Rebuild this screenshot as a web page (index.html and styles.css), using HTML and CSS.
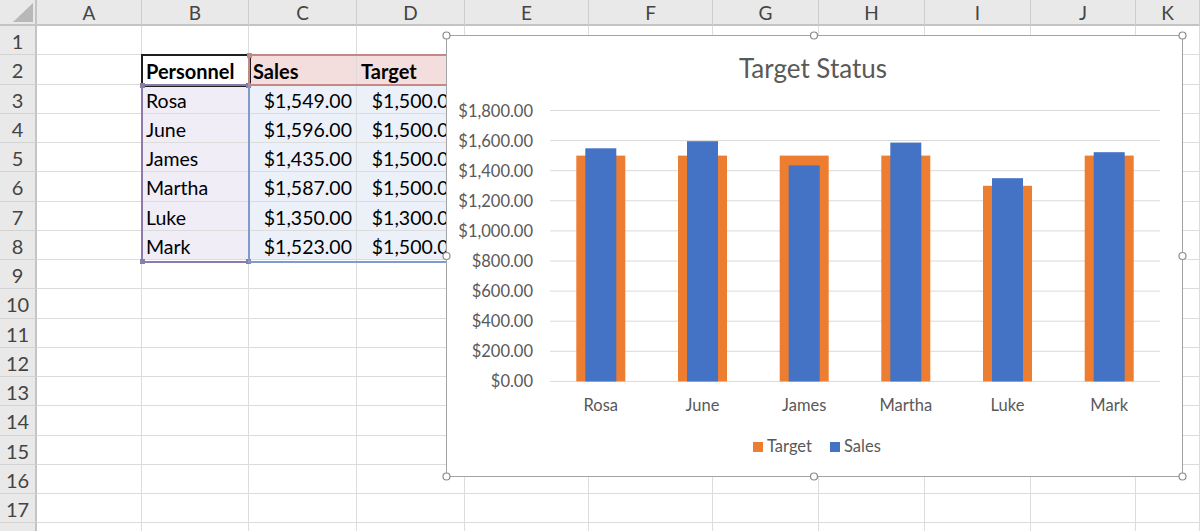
FILE: index.html
```html
<!DOCTYPE html>
<html>
<head>
<meta charset="utf-8">
<link rel="stylesheet" href="styles.css">
</head>
<body>
<div class="sheet">
  <div class="ch corner"><span class="tri"></span></div>
  <div class="ch">A</div><div class="ch">B</div><div class="ch">C</div><div class="ch">D</div><div class="ch">E</div><div class="ch">F</div><div class="ch">G</div><div class="ch">H</div><div class="ch">I</div><div class="ch">J</div><div class="ch">K</div>

  <div class="rn">1</div><div class="c"></div><div class="c"></div><div class="c"></div><div class="c"></div><div class="c"></div><div class="c"></div><div class="c"></div><div class="c"></div><div class="c"></div><div class="c"></div><div class="c"></div>

  <div class="rn">2</div><div class="c"></div><div class="c b">Personnel</div><div class="c b ser">Sales</div><div class="c b ser">Target</div><div class="c"></div><div class="c"></div><div class="c"></div><div class="c"></div><div class="c"></div><div class="c"></div><div class="c"></div>

  <div class="rn">3</div><div class="c"></div><div class="c cat">Rosa</div><div class="c num val">$1,549.00</div><div class="c num val">$1,500.00</div><div class="c"></div><div class="c"></div><div class="c"></div><div class="c"></div><div class="c"></div><div class="c"></div><div class="c"></div>

  <div class="rn">4</div><div class="c"></div><div class="c cat">June</div><div class="c num val">$1,596.00</div><div class="c num val">$1,500.00</div><div class="c"></div><div class="c"></div><div class="c"></div><div class="c"></div><div class="c"></div><div class="c"></div><div class="c"></div>

  <div class="rn">5</div><div class="c"></div><div class="c cat">James</div><div class="c num val">$1,435.00</div><div class="c num val">$1,500.00</div><div class="c"></div><div class="c"></div><div class="c"></div><div class="c"></div><div class="c"></div><div class="c"></div><div class="c"></div>

  <div class="rn">6</div><div class="c"></div><div class="c cat">Martha</div><div class="c num val">$1,587.00</div><div class="c num val">$1,500.00</div><div class="c"></div><div class="c"></div><div class="c"></div><div class="c"></div><div class="c"></div><div class="c"></div><div class="c"></div>

  <div class="rn">7</div><div class="c"></div><div class="c cat">Luke</div><div class="c num val">$1,350.00</div><div class="c num val">$1,300.00</div><div class="c"></div><div class="c"></div><div class="c"></div><div class="c"></div><div class="c"></div><div class="c"></div><div class="c"></div>

  <div class="rn">8</div><div class="c"></div><div class="c cat">Mark</div><div class="c num val">$1,523.00</div><div class="c num val">$1,500.00</div><div class="c"></div><div class="c"></div><div class="c"></div><div class="c"></div><div class="c"></div><div class="c"></div><div class="c"></div>

  <div class="rn">9</div><div class="c"></div><div class="c"></div><div class="c"></div><div class="c"></div><div class="c"></div><div class="c"></div><div class="c"></div><div class="c"></div><div class="c"></div><div class="c"></div><div class="c"></div>
  <div class="rn">10</div><div class="c"></div><div class="c"></div><div class="c"></div><div class="c"></div><div class="c"></div><div class="c"></div><div class="c"></div><div class="c"></div><div class="c"></div><div class="c"></div><div class="c"></div>
  <div class="rn">11</div><div class="c"></div><div class="c"></div><div class="c"></div><div class="c"></div><div class="c"></div><div class="c"></div><div class="c"></div><div class="c"></div><div class="c"></div><div class="c"></div><div class="c"></div>
  <div class="rn">12</div><div class="c"></div><div class="c"></div><div class="c"></div><div class="c"></div><div class="c"></div><div class="c"></div><div class="c"></div><div class="c"></div><div class="c"></div><div class="c"></div><div class="c"></div>
  <div class="rn">13</div><div class="c"></div><div class="c"></div><div class="c"></div><div class="c"></div><div class="c"></div><div class="c"></div><div class="c"></div><div class="c"></div><div class="c"></div><div class="c"></div><div class="c"></div>
  <div class="rn">14</div><div class="c"></div><div class="c"></div><div class="c"></div><div class="c"></div><div class="c"></div><div class="c"></div><div class="c"></div><div class="c"></div><div class="c"></div><div class="c"></div><div class="c"></div>
  <div class="rn">15</div><div class="c"></div><div class="c"></div><div class="c"></div><div class="c"></div><div class="c"></div><div class="c"></div><div class="c"></div><div class="c"></div><div class="c"></div><div class="c"></div><div class="c"></div>
  <div class="rn">16</div><div class="c"></div><div class="c"></div><div class="c"></div><div class="c"></div><div class="c"></div><div class="c"></div><div class="c"></div><div class="c"></div><div class="c"></div><div class="c"></div><div class="c"></div>
  <div class="rn">17</div><div class="c"></div><div class="c"></div><div class="c"></div><div class="c"></div><div class="c"></div><div class="c"></div><div class="c"></div><div class="c"></div><div class="c"></div><div class="c"></div><div class="c"></div>
  <div class="rn"></div><div class="c"></div><div class="c"></div><div class="c"></div><div class="c"></div><div class="c"></div><div class="c"></div><div class="c"></div><div class="c"></div><div class="c"></div><div class="c"></div><div class="c"></div>
</div>

<div class="rng active-cell"></div>
<div class="rng rng-cat"><i class="h tl"></i><i class="h tr"></i><i class="h bl"></i><i class="h br"></i></div>
<div class="rng rng-val"></div>
<div class="rng rng-ser"><i class="h tl"></i></div>

<div class="chart">
<svg class="chart-svg" width="737" height="442" viewBox="0 0 737 442">
  <rect x="0.5" y="0.5" width="736" height="441" fill="#fff" stroke="#a3a3a3" stroke-width="1"/>
  <text class="title" x="367" y="43" text-anchor="middle">Target Status</text>
  <g stroke="#d9d9d9" stroke-width="1">
    <line x1="104" y1="75.5" x2="714" y2="75.5"/>
    <line x1="104" y1="105.6" x2="714" y2="105.6"/>
    <line x1="104" y1="135.7" x2="714" y2="135.7"/>
    <line x1="104" y1="165.8" x2="714" y2="165.8"/>
    <line x1="104" y1="195.9" x2="714" y2="195.9"/>
    <line x1="104" y1="226" x2="714" y2="226"/>
    <line x1="104" y1="256.1" x2="714" y2="256.1"/>
    <line x1="104" y1="286.2" x2="714" y2="286.2"/>
    <line x1="104" y1="316.3" x2="714" y2="316.3"/>
    <line x1="104" y1="346.4" x2="714" y2="346.4"/>
  </g>
  <g class="axis" text-anchor="end">
    <text x="87" y="81.5">$1,800.00</text>
    <text x="87" y="111.6">$1,600.00</text>
    <text x="87" y="141.7">$1,400.00</text>
    <text x="87" y="171.8">$1,200.00</text>
    <text x="87" y="201.9">$1,000.00</text>
    <text x="87" y="232">$800.00</text>
    <text x="87" y="262.1">$600.00</text>
    <text x="87" y="292.2">$400.00</text>
    <text x="87" y="322.3">$200.00</text>
    <text x="87" y="352.4">$0.00</text>
  </g>
  <g fill="#ed7d31">
    <rect x="130.3" y="120.6" width="49" height="225.8"/>
    <rect x="232" y="120.6" width="49" height="225.8"/>
    <rect x="333.7" y="120.6" width="49" height="225.8"/>
    <rect x="435.3" y="120.6" width="49" height="225.8"/>
    <rect x="537" y="150.8" width="49" height="195.6"/>
    <rect x="638.7" y="120.6" width="49" height="225.8"/>
  </g>
  <g fill="#4472c4">
    <rect x="139.3" y="113.3" width="31" height="233.1"/>
    <rect x="241" y="106.2" width="31" height="240.2"/>
    <rect x="342.7" y="130.4" width="31" height="216"/>
    <rect x="444.3" y="107.6" width="31" height="238.8"/>
    <rect x="546" y="143.2" width="31" height="203.2"/>
    <rect x="647.7" y="117.2" width="31" height="229.2"/>
  </g>
  <g class="axis" text-anchor="middle">
    <text x="154.8" y="376">Rosa</text>
    <text x="256.5" y="376">June</text>
    <text x="358.2" y="376">James</text>
    <text x="459.8" y="376">Martha</text>
    <text x="561.5" y="376">Luke</text>
    <text x="663.2" y="376">Mark</text>
  </g>
  <rect x="307" y="407" width="10" height="10" fill="#ed7d31"/>
  <text class="axis" x="321" y="417">Target</text>
  <rect x="384" y="407" width="10" height="10" fill="#4472c4"/>
  <text class="axis" x="398" y="417">Sales</text>
  <g fill="#fff" stroke="#8a8a8a" stroke-width="1.2">
    <circle cx="0.5" cy="0.5" r="3.5"/>
    <circle cx="368" cy="0.5" r="3.5"/>
    <circle cx="736.5" cy="0.5" r="3.5"/>
    <circle cx="0.5" cy="221" r="3.5"/>
    <circle cx="736.5" cy="221" r="3.5"/>
    <circle cx="0.5" cy="441.5" r="3.5"/>
    <circle cx="368" cy="441.5" r="3.5"/>
    <circle cx="736.5" cy="441.5" r="3.5"/>
  </g>
</svg>
</div>
</body>
</html>
```

FILE: styles.css
```css
html, body {
  margin: 0;
  padding: 0;
  background: #fff;
  overflow: hidden;
}
body {
  position: relative;
  width: 1200px;
  height: 531px;
  font-family: Lato, "Open Sans", sans-serif;
  color: #000;
}
.sheet {
  display: grid;
  grid-template-columns: 37px 105px 107px 108px 108px 124px 124px 106px 106px 106px 105px 64px;
  grid-template-rows: 26px repeat(18, 29.25px);
}
.ch {
  box-sizing: border-box;
  background: #e9e9e9;
  border-right: 1px solid #cdcdcd;
  border-bottom: 2px solid #c4c4c4;
  display: flex;
  align-items: center;
  justify-content: center;
  font-size: 19px;
  color: #444;
}
.corner {
  position: relative;
  border-right: 2px solid #c4c4c4;
}
.tri {
  position: absolute;
  right: 2px;
  bottom: 2px;
  width: 0;
  height: 0;
  border-left: 20px solid transparent;
  border-bottom: 19px solid #b8b8b8;
}
.rn {
  box-sizing: border-box;
  background: #e9e9e9;
  border-right: 2px solid #c4c4c4;
  border-bottom: 1px solid #d3d3d3;
  display: flex;
  align-items: center;
  justify-content: center;
  padding-top: 2px;
  font-size: 20px;
  color: #444;
}
.c {
  box-sizing: border-box;
  border-right: 1px solid #dcdcdc;
  border-bottom: 1px solid #dcdcdc;
  display: flex;
  align-items: center;
  padding: 3px 4px 0 4px;
  font-size: 19.5px;
  white-space: nowrap;
  overflow: hidden;
}
.num { justify-content: flex-end; }
.b { font-weight: bold; font-size: 20px; }
.cat { background: #f0edf7; }
.ser { background: #f3dedd; }
.val { background: #ecf1f9; }

.rng {
  position: absolute;
  box-sizing: border-box;
}
.active-cell {
  left: 141px;
  top: 54px;
  width: 110px;
  height: 33px;
  border: 2px solid #1f1f1f;
}
.rng-val {
  left: 248px;
  top: 84px;
  width: 220px;
  height: 179px;
  border: 2px solid #7f9acb;
}
.rng-ser {
  left: 248px;
  top: 54px;
  width: 220px;
  height: 32px;
  border: 2px solid #c48886;
}
.rng-cat {
  left: 141px;
  top: 84px;
  width: 109px;
  height: 179px;
  border: 2px solid #8c7cab;
}
.h {
  position: absolute;
  width: 5px;
  height: 5px;
  background: #8c7cab;
}
.rng-ser .h { background: #c48886; }
.tl { left: -3px; top: -3px; }
.tr { right: -3px; top: -3px; }
.bl { left: -3px; bottom: -3px; }
.br { right: -3px; bottom: -3px; }

.chart {
  position: absolute;
  left: 446px;
  top: 35px;
  width: 737px;
  height: 442px;
}
.chart-svg {
  display: block;
  overflow: visible;
  font-family: Lato, "Open Sans", sans-serif;
}
.title {
  font-size: 26px;
  fill: #595959;
}
.axis {
  font-size: 16.5px;
  fill: #595959;
}
```
